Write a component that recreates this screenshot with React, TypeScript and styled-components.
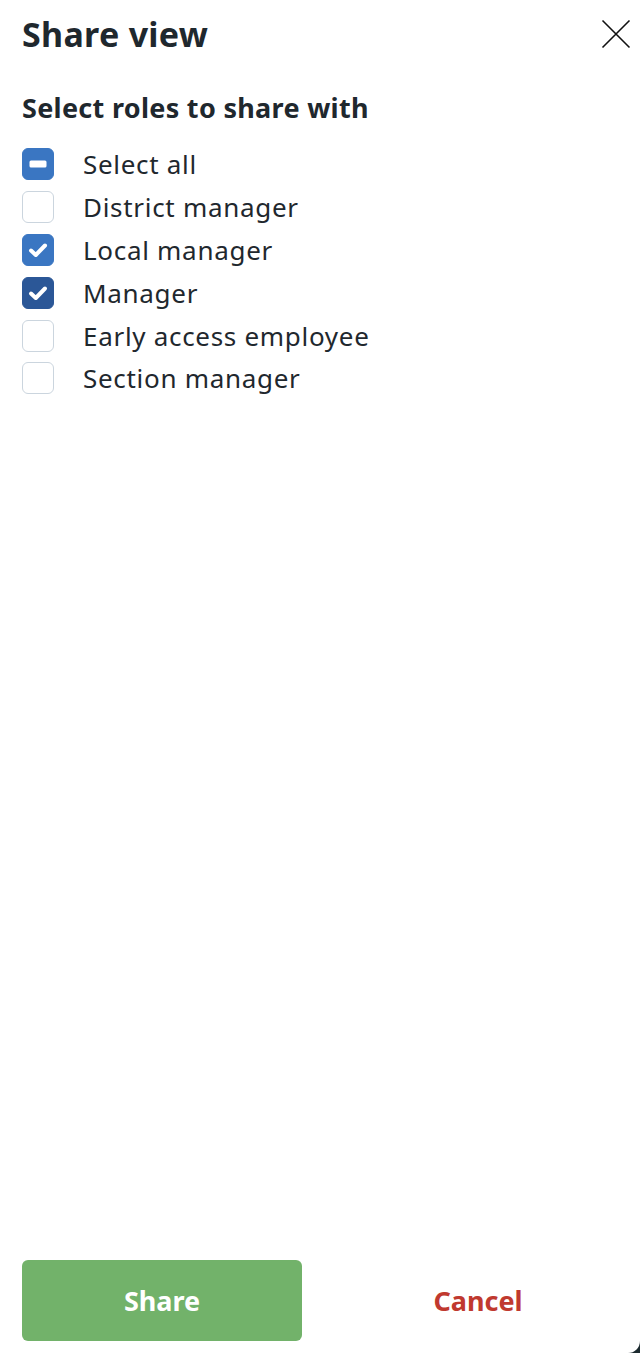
import React from "react";
import styled, { createGlobalStyle } from "styled-components";

const Global = createGlobalStyle`
  html, body { margin: 0; padding: 0; background: #1b2a2f; }
  body { font-family: "Noto Sans", "Open Sans", sans-serif; }
  * { box-sizing: border-box; }
`;

const Panel = styled.div`
  width: 640px;
  height: 1353px;
  background: #ffffff;
  border-bottom-right-radius: 12px;
  display: flex;
  flex-direction: column;
  padding: 0 22px;
  color: #1f282e;
`;

const Header = styled.div`
  display: flex;
  align-items: center;
  justify-content: space-between;
  height: 68px;
`;

const Title = styled.h1`
  margin: 0;
  font-size: 34px;
  font-weight: 700;
  line-height: 1;
  letter-spacing: 0.3px;
`;

const CloseButton = styled.button`
  border: none;
  background: none;
  padding: 0;
  margin-right: -13px;
  width: 30px;
  height: 30px;
  display: flex;
  align-items: center;
  justify-content: center;
  cursor: pointer;
`;

const Subtitle = styled.h2`
  margin: 26px 0 22px;
  font-size: 27px;
  font-weight: 700;
  line-height: 1;
  letter-spacing: 0.3px;
`;

const List = styled.div`
  display: flex;
  flex-direction: column;
`;

const Row = styled.label`
  display: flex;
  align-items: center;
  gap: 29px;
  height: 42.8px;
  font-size: 26px;
  letter-spacing: 0.7px;
  cursor: pointer;
`;

const Box = styled.span<{ $state: "off" | "on" | "mixed"; $dark?: boolean }>`
  width: 32px;
  height: 32px;
  flex: none;
  border-radius: 6px;
  display: flex;
  align-items: center;
  justify-content: center;
  background: ${(p) => (p.$state === "off" ? "#fff" : p.$dark ? "#2b5797" : "#3a76c2")};
  border: 1.5px solid ${(p) => (p.$state === "off" ? "#cbd5de" : p.$dark ? "#2b5797" : "#3a76c2")};
`;

const Spacer = styled.div`
  flex: 1;
`;

const Footer = styled.div`
  display: grid;
  grid-template-columns: 280px 1fr;
  gap: 36px;
  padding-bottom: 12px;
`;

const PrimaryButton = styled.button`
  height: 81px;
  border: none;
  border-radius: 6px;
  background: #72b26a;
  color: #fff;
  font-family: inherit;
  font-size: 27px;
  font-weight: 700;
  cursor: pointer;
`;

const TextButton = styled.button`
  height: 81px;
  border: none;
  background: none;
  color: #c0392f;
  font-family: inherit;
  font-size: 27px;
  font-weight: 700;
  cursor: pointer;
`;

const Check = () => (
  <svg width="20" height="16" viewBox="0 0 20 16">
    <path d="M3 8.5 L7.8 13 L17 3.5" fill="none" stroke="#fff" strokeWidth="4" strokeLinecap="round" strokeLinejoin="round" />
  </svg>
);

const Dash = () => (
  <svg width="18" height="8" viewBox="0 0 18 8">
    <rect x="0.5" y="0.5" width="17" height="7" rx="1.5" fill="#fff" />
  </svg>
);

const roles: { label: string; state: "off" | "on" | "mixed"; dark?: boolean }[] = [
  { label: "Select all", state: "mixed" },
  { label: "District manager", state: "off" },
  { label: "Local manager", state: "on" },
  { label: "Manager", state: "on", dark: true },
  { label: "Early access employee", state: "off" },
  { label: "Section manager", state: "off" },
];

export default function App() {
  return (
    <>
      <Global />
      <Panel>
        <Header>
          <Title>Share view</Title>
          <CloseButton aria-label="Close">
            <svg width="30" height="30" viewBox="0 0 30 30">
              <path d="M1.5 1.5 L28.5 28.5 M28.5 1.5 L1.5 28.5" stroke="#111" strokeWidth="1.6" />
            </svg>
          </CloseButton>
        </Header>
        <Subtitle>Select roles to share with</Subtitle>
        <List>
          {roles.map((r) => (
            <Row key={r.label}>
              <Box $state={r.state} $dark={r.dark}>
                {r.state === "on" && <Check />}
                {r.state === "mixed" && <Dash />}
              </Box>
              {r.label}
            </Row>
          ))}
        </List>
        <Spacer />
        <Footer>
          <PrimaryButton>Share</PrimaryButton>
          <TextButton>Cancel</TextButton>
        </Footer>
      </Panel>
    </>
  );
}
